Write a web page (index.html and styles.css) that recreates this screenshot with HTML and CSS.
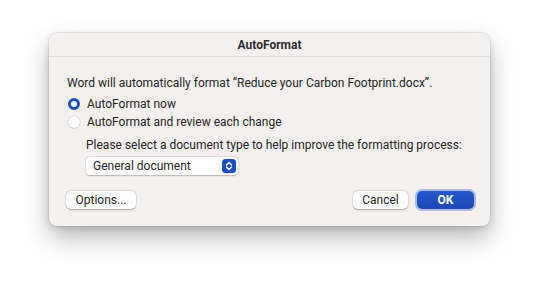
FILE: index.html
```html
<!DOCTYPE html>
<html lang="en">
<head>
    <meta charset="UTF-8">
    <title>AutoFormat</title>
    <link rel="stylesheet" href="styles.css">
</head>
<body>
    <div class="dialog">
        <div class="title-bar">AutoFormat</div>
        <div class="content">
            <p class="intro">Word will automatically format “Reduce your Carbon Footprint.docx”.</p>
            <label class="radio-row">
                <span class="radio checked"></span>
                AutoFormat now
            </label>
            <label class="radio-row">
                <span class="radio"></span>
                AutoFormat and review each change
            </label>
            <div class="doc-type">
                <p>Please select a document type to help improve the formatting process:</p>
                <div class="select">
                    <span>General document</span>
                    <span class="stepper">
                        <svg width="8" height="10" viewBox="0 0 8 10">
                            <path d="M1.5 4 L4 1.5 L6.5 4 M1.5 6 L4 8.5 L6.5 6" fill="none" stroke="#fff" stroke-width="1.4" stroke-linecap="round" stroke-linejoin="round"/>
                        </svg>
                    </span>
                </div>
            </div>
        </div>
        <div class="footer">
            <button class="btn options">Options...</button>
            <div class="right-buttons">
                <button class="btn cancel">Cancel</button>
                <button class="btn primary">OK</button>
            </div>
        </div>
    </div>
</body>
</html>
```

FILE: styles.css
```css
* {
    margin: 0;
    padding: 0;
    box-sizing: border-box;
}

body {
    font-family: Roboto, 'Noto Sans', sans-serif;
    background: #ffffff;
    width: 540px;
    height: 292px;
    padding: 33px 0 0 49px;
    color: #262626;
    font-size: 12px;
}

.dialog {
    width: 441px;
    height: 193px;
    background: #f4f0ef;
    border-radius: 8px;
    box-shadow: 0 0 0 0.5px rgba(0, 0, 0, 0.12), 0 12px 24px rgba(0, 0, 0, 0.28), 0 2px 6px rgba(0, 0, 0, 0.12);
    display: flex;
    flex-direction: column;
}

.title-bar {
    height: 24px;
    border-bottom: 1px solid #e2dedd;
    text-align: center;
    font-weight: 700;
    font-size: 12px;
    line-height: 24px;
    color: #2e2e2e;
}

.content {
    padding: 18px 18px 0 18px;
    white-space: nowrap;
}

.intro {
    line-height: 16px;
    margin-bottom: 4px;
}

.radio-row {
    display: flex;
    align-items: center;
    gap: 7px;
    height: 18px;
    padding-left: 1px;
}

.radio {
    width: 12px;
    height: 12px;
    border-radius: 50%;
    background: #fff;
    box-shadow: 0 0 0 0.5px rgba(0, 0, 0, 0.15), 0 0.5px 1px rgba(0, 0, 0, 0.15);
}

.radio.checked {
    background: #fff;
    border: 3.5px solid #1b4fbf;
    box-shadow: none;
}

.doc-type {
    padding-left: 19px;
    margin-top: 6px;
}

.doc-type p {
    line-height: 16px;
    margin-bottom: 4px;
}

.select {
    width: 152px;
    height: 18px;
    background: #fff;
    border-radius: 4px;
    box-shadow: 0 0 0 0.5px rgba(0, 0, 0, 0.12), 0 0.5px 1.5px rgba(0, 0, 0, 0.2);
    display: flex;
    align-items: center;
    justify-content: space-between;
    padding: 0 2px 0 7px;
}

.stepper {
    width: 14px;
    height: 14px;
    background: #1b4fbf;
    border-radius: 3.5px;
    display: flex;
    align-items: center;
    justify-content: center;
}

.footer {
    margin-top: auto;
    padding: 0 16px 17px 17px;
    display: flex;
    justify-content: space-between;
    align-items: center;
}

.right-buttons {
    display: flex;
    gap: 9px;
    align-items: center;
}

.btn {
    font-family: inherit;
    font-size: 12px;
    color: #262626;
    background: #fff;
    border: none;
    border-radius: 5px;
    height: 18px;
    padding: 0 8px;
    box-shadow: 0 0 0 0.5px rgba(0, 0, 0, 0.1), 0 0.5px 1.5px rgba(0, 0, 0, 0.25);
}

.btn.options {
    width: 70px;
}

.btn.cancel {
    width: 55px;
}

.btn.primary {
    width: 57px;
    background: linear-gradient(#2558cc, #1b48b6);
    color: #fff;
    font-weight: 700;
    box-shadow: 0 0 0 2px rgba(80, 120, 210, 0.45);
}
```
